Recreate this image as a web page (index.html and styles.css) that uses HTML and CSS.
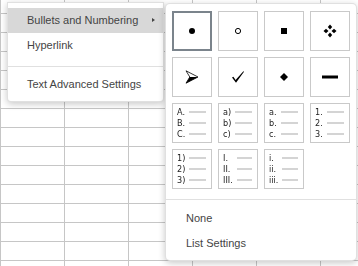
FILE: index.html
```html
<!DOCTYPE html>
<html>
<head>
<meta charset="utf-8">
<link rel="stylesheet" href="styles.css">
</head>
<body>
<div class="sheet">
  <div class="menu ctx">
    <div class="item active">Bullets and Numbering<span class="caret"></span></div>
    <div class="item">Hyperlink</div>
    <div class="sep"></div>
    <div class="item">Text Advanced Settings</div>
  </div>
  <div class="menu sub">
    <div class="bullets">
      <div class="cell selected">
        <svg width="12" height="12" viewBox="0 0 12 12"><circle cx="6" cy="6" r="3" fill="#000"/></svg>
      </div>
      <div class="cell">
        <svg width="12" height="12" viewBox="0 0 12 12"><circle cx="6" cy="6" r="2.6" fill="none" stroke="#000" stroke-width="1"/></svg>
      </div>
      <div class="cell">
        <svg width="12" height="12" viewBox="0 0 12 12"><rect x="3" y="3" width="6" height="6" fill="#000"/></svg>
      </div>
      <div class="cell">
        <svg width="14" height="14" viewBox="0 0 14 14"><g fill="#000"><path d="M7 0.5 L9.2 3 L7 5.5 L4.8 3 Z"/><path d="M0.5 7 L3 4.8 L5.5 7 L3 9.2 Z"/><path d="M8.5 7 L11 4.8 L13.5 7 L11 9.2 Z"/><path d="M7 8.5 L9.2 11 L7 13.5 L4.8 11 Z"/></g></svg>
      </div>
      <div class="cell">
        <svg width="14" height="14" viewBox="0 0 14 14"><path d="M1 0.8 L13 7 L1 13.2 L4.8 7 Z" fill="none" stroke="#000" stroke-width="0.8"/><path d="M4.8 7 L13 7 L1 13.2 Z" fill="#000"/></svg>
      </div>
      <div class="cell">
        <svg width="14" height="14" viewBox="0 0 14 14"><path d="M1 7.6 L2.4 6.8 L4.6 10 L12.4 1.2 L13 1.7 L5 12.8 Z" fill="#000"/></svg>
      </div>
      <div class="cell">
        <svg width="10" height="10" viewBox="0 0 10 10"><path d="M5 1 L9 5 L5 9 L1 5 Z" fill="#000"/></svg>
      </div>
      <div class="cell">
        <svg width="16" height="4" viewBox="0 0 16 4"><rect x="0" y="0.5" width="16" height="3" fill="#000"/></svg>
      </div>

      <div class="cell list">
        <span>A.</span><i></i><span>B.</span><i></i><span>C.</span><i></i>
      </div>
      <div class="cell list">
        <span>a)</span><i></i><span>b)</span><i></i><span>c)</span><i></i>
      </div>
      <div class="cell list">
        <span>a.</span><i></i><span>b.</span><i></i><span>c.</span><i></i>
      </div>
      <div class="cell list">
        <span>1.</span><i></i><span>2.</span><i></i><span>3.</span><i></i>
      </div>
      <div class="cell list">
        <span>1)</span><i></i><span>2)</span><i></i><span>3)</span><i></i>
      </div>
      <div class="cell list">
        <span>I.</span><i></i><span>II.</span><i></i><span>III.</span><i></i>
      </div>
      <div class="cell list">
        <span>i.</span><i></i><span>ii.</span><i></i><span>iii.</span><i></i>
      </div>
    </div>
    <div class="sep sub-sep"></div>
    <div class="item">None</div>
    <div class="item">List Settings</div>
  </div>
</div>
</body>
</html>
```

FILE: styles.css
```css
html, body {
  margin: 0;
  padding: 0;
  background: #fff;
}

.sheet {
  position: relative;
  width: 358px;
  height: 266px;
  overflow: hidden;
  background-color: #fff;
  background-image:
    linear-gradient(to right, #c6c6c6 1px, transparent 1px),
    linear-gradient(to bottom, #c6c6c6 1px, transparent 1px);
  background-size: 64px 100%, 100% 19px;
  background-position: 0 0, 0 13px;
  font-family: "Liberation Sans", Arial, sans-serif;
}

.menu {
  position: absolute;
  box-sizing: border-box;
  background: #fff;
  border: 1px solid rgba(0, 0, 0, 0.12);
  box-shadow: 0 2px 7px rgba(0, 0, 0, 0.22);
  color: #444;
  font-size: 11px;
}

.ctx {
  left: 7px;
  top: 2px;
  width: 157px;
  padding: 5px 0 4px;
  border-radius: 0 0 4px 4px;
}

.item {
  position: relative;
  height: 25px;
  line-height: 25px;
  padding-left: 19px;
  white-space: nowrap;
}

.item.active {
  background: #d8d8d8;
}

.caret {
  position: absolute;
  right: 8px;
  top: 10px;
  width: 0;
  height: 0;
  border-left: 3px solid #444;
  border-top: 2.5px solid transparent;
  border-bottom: 2.5px solid transparent;
}

.sep {
  height: 1px;
  background: #e0e0e0;
  margin: 8px 0 5px;
}

.sub {
  left: 165px;
  top: 3px;
  width: 192px;
  height: 258px;
  border-radius: 5px;
  padding: 7px 6px 4px;
}

.sub-sep {
  margin: 10px -6px 6px;
}

.sub .item {
  padding-left: 14px;
}

.bullets {
  display: grid;
  grid-template-columns: repeat(4, 40px);
  grid-auto-rows: 40px;
  gap: 6px;
}

.cell {
  box-sizing: border-box;
  border: 1px solid #c9c9c9;
  display: flex;
  align-items: center;
  justify-content: center;
}

.cell.selected {
  border: 2px solid #7b848c;
}

.cell svg {
  display: block;
}

.cell.list {
  display: grid;
  grid-template-columns: auto 1fr;
  grid-auto-rows: 11px;
  column-gap: 4px;
  align-content: center;
  align-items: center;
  justify-content: stretch;
  padding: 0 5px 0 4px;
  font-family: "DejaVu Sans Condensed", "DejaVu Sans", sans-serif;
  font-size: 9px;
  color: #222;
  will-change: transform;
}

.cell.list span {
  line-height: 11px;
}

.cell.list i {
  display: block;
  height: 2px;
  background: #d4d4d4;
}
```
